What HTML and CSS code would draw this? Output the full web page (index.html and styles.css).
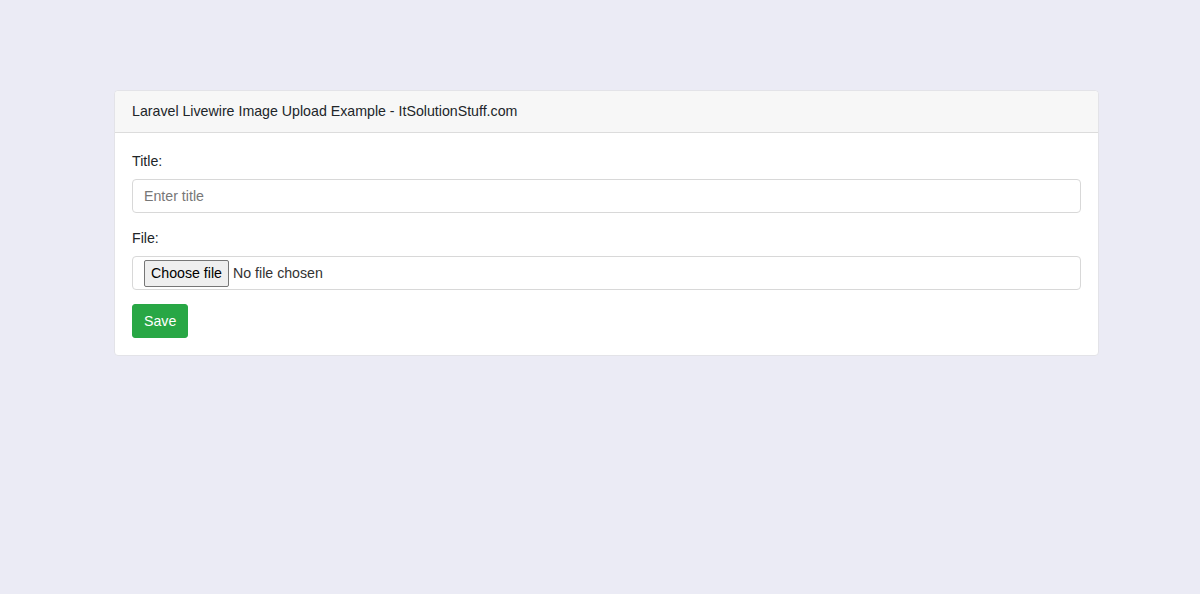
FILE: index.html
```html
<!DOCTYPE html>
<html lang="en">
<head>
    <meta charset="utf-8">
    <title>Laravel Livewire Image Upload Example - ItSolutionStuff.com</title>
    <link rel="stylesheet" href="styles.css">
</head>
<body>
    <div class="container">
        <div class="card">
            <div class="card-header">
                Laravel Livewire Image Upload Example - ItSolutionStuff.com
            </div>
            <div class="card-body">
                <form>
                    <div class="form-group">
                        <label for="title">Title:</label>
                        <input type="text" class="form-control" id="title" placeholder="Enter title">
                    </div>
                    <div class="form-group file-group">
                        <label for="file">File:</label>
                        <label class="form-control file-control">
                            <input type="file" id="file" class="file-input">
                            <span class="file-button">Choose file</span>
                            <span class="file-name">No file chosen</span>
                        </label>
                    </div>
                    <button type="button" class="btn btn-success">Save</button>
                </form>
            </div>
        </div>
    </div>
</body>
</html>
```

FILE: styles.css
```css
body {
    margin: 0;
    background-color: #ebebf5;
    font-family: "Liberation Sans", Arial, sans-serif;
    font-size: 14.2px;
    color: #212529;
}

.container {
    width: 985px;
    margin: 90px 0 0 114px;
}

.card {
    background-color: #fff;
    border: 1px solid #e3e3e8;
    border-radius: 4px;
}

.card-header {
    height: 39px;
    padding: 0 17px 2px 17px;
    display: flex;
    align-items: center;
    background-color: #f7f7f7;
    border-bottom: 1px solid #dcdcdc;
    border-radius: 4px 4px 0 0;
}

.card-body {
    padding: 20px 17px 17px 17px;
}

.form-group {
    margin-bottom: 17px;
}

.file-group {
    margin-bottom: 14px;
}

label {
    display: block;
    margin-bottom: 10px;
}

.form-control {
    box-sizing: border-box;
    display: block;
    width: 100%;
    height: 34px;
    margin: 0;
    padding: 0 11px;
    font-family: inherit;
    font-size: 14.2px;
    color: #495057;
    background-color: #fff;
    border: 1px solid #d8d8d8;
    border-radius: 4px;
}

.form-control::placeholder {
    color: #777;
}

.file-control {
    display: flex;
    align-items: center;
    color: #333;
}

.file-input {
    display: none;
}

.file-button {
    box-sizing: border-box;
    display: flex;
    align-items: center;
    height: 27px;
    margin-right: 4px;
    padding: 0 6px;
    color: #000;
    background-color: #efefef;
    border: 1px solid #767676;
    border-radius: 2px;
}

.btn {
    height: 34px;
    padding: 0 11px;
    font-family: inherit;
    font-size: 14.2px;
    border: 1px solid transparent;
    border-radius: 3px;
}

.btn-success {
    color: #fff;
    background-color: #28a745;
    border-color: #28a745;
}
```
